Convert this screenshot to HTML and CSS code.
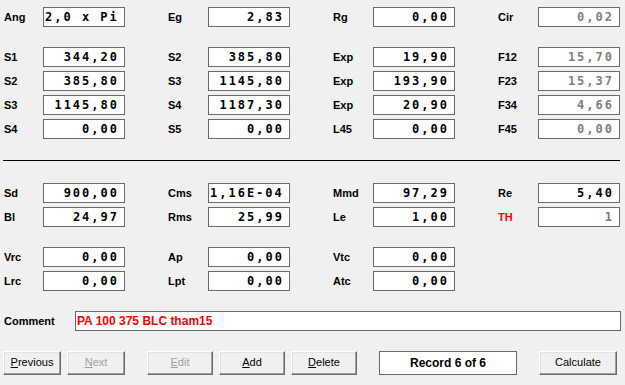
FILE: index.html
```html
<!DOCTYPE html>
<html>
<head>
<meta charset="utf-8">
<link rel="stylesheet" href="styles.css">
</head>
<body>
<div class="form">
  <div class="row">
    <div class="pair"><span class="lbl">Ang</span><span class="box left">2,0 x Pi</span></div>
    <div class="pair"><span class="lbl">Eg</span><span class="box">2,83</span></div>
    <div class="pair"><span class="lbl">Rg</span><span class="box">0,00</span></div>
    <div class="pair"><span class="lbl">Cir</span><span class="box ro">0,02</span></div>
  </div>
  <div class="row spaced">
    <div class="pair"><span class="lbl">S1</span><span class="box">344,20</span></div>
    <div class="pair"><span class="lbl">S2</span><span class="box">385,80</span></div>
    <div class="pair"><span class="lbl">Exp</span><span class="box">19,90</span></div>
    <div class="pair"><span class="lbl">F12</span><span class="box ro">15,70</span></div>
  </div>
  <div class="row">
    <div class="pair"><span class="lbl">S2</span><span class="box">385,80</span></div>
    <div class="pair"><span class="lbl">S3</span><span class="box">1145,80</span></div>
    <div class="pair"><span class="lbl">Exp</span><span class="box">193,90</span></div>
    <div class="pair"><span class="lbl">F23</span><span class="box ro">15,37</span></div>
  </div>
  <div class="row">
    <div class="pair"><span class="lbl">S3</span><span class="box">1145,80</span></div>
    <div class="pair"><span class="lbl">S4</span><span class="box">1187,30</span></div>
    <div class="pair"><span class="lbl">Exp</span><span class="box">20,90</span></div>
    <div class="pair"><span class="lbl">F34</span><span class="box ro">4,66</span></div>
  </div>
  <div class="row">
    <div class="pair"><span class="lbl">S4</span><span class="box">0,00</span></div>
    <div class="pair"><span class="lbl">S5</span><span class="box">0,00</span></div>
    <div class="pair"><span class="lbl">L45</span><span class="box">0,00</span></div>
    <div class="pair"><span class="lbl">F45</span><span class="box ro">0,00</span></div>
  </div>

  <div class="sep"></div>

  <div class="row after-sep">
    <div class="pair"><span class="lbl">Sd</span><span class="box">900,00</span></div>
    <div class="pair"><span class="lbl">Cms</span><span class="box left">1,16E-04</span></div>
    <div class="pair"><span class="lbl">Mmd</span><span class="box">97,29</span></div>
    <div class="pair"><span class="lbl">Re</span><span class="box">5,40</span></div>
  </div>
  <div class="row">
    <div class="pair"><span class="lbl">Bl</span><span class="box">24,97</span></div>
    <div class="pair"><span class="lbl">Rms</span><span class="box">25,99</span></div>
    <div class="pair"><span class="lbl">Le</span><span class="box">1,00</span></div>
    <div class="pair"><span class="lbl red">TH</span><span class="box ro">1</span></div>
  </div>
  <div class="row spaced">
    <div class="pair"><span class="lbl">Vrc</span><span class="box">0,00</span></div>
    <div class="pair"><span class="lbl">Ap</span><span class="box">0,00</span></div>
    <div class="pair"><span class="lbl">Vtc</span><span class="box">0,00</span></div>
  </div>
  <div class="row">
    <div class="pair"><span class="lbl">Lrc</span><span class="box">0,00</span></div>
    <div class="pair"><span class="lbl">Lpt</span><span class="box">0,00</span></div>
    <div class="pair"><span class="lbl">Atc</span><span class="box">0,00</span></div>
  </div>

  <div class="comment-row">
    <span class="lbl">Comment</span>
    <span class="comment">PA 100 375 BLC tham15</span>
  </div>

  <div class="btns">
    <div class="btn narrow"><u>P</u>revious</div>
    <div class="btn narrow disabled"><u>N</u>ext</div>
    <div class="btn group disabled"><u>E</u>dit</div>
    <div class="btn"><u>A</u>dd</div>
    <div class="btn"><u>D</u>elete</div>
    <div class="record group">Record 6 of 6</div>
    <div class="btn calc group">Calculate</div>
  </div>
</div>
</body>
</html>
```

FILE: styles.css
```css
html, body {
  margin: 0;
  padding: 0;
}
body {
  background: #f0f0f0;
  font-family: "Liberation Sans", Arial, sans-serif;
  width: 625px;
  height: 385px;
  overflow: hidden;
}
.form {
  display: flex;
  flex-direction: column;
  padding-top: 7px;
}
.row {
  display: grid;
  grid-template-columns: 121px 122px 122px 122px;
  column-gap: 43px;
  height: 20px;
  margin-left: 4px;
  margin-top: 4px;
}
.row:first-child {
  margin-top: 0;
}
.row.spaced {
  margin-top: 20px;
}
.row.after-sep {
  margin-top: 22px;
}
.pair {
  display: flex;
  align-items: center;
  justify-content: space-between;
}
.lbl {
  font-weight: bold;
  font-size: 11px;
  color: #000;
}
.lbl.red {
  color: #ff0000;
}
.box {
  width: 82px;
  height: 20px;
  box-sizing: border-box;
  border: 1px solid #6a6a6a;
  background: #fff;
  font-family: "DejaVu Sans Mono", monospace;
  font-weight: bold;
  font-size: 12px;
  letter-spacing: 2px;
  line-height: 18px;
  text-align: right;
  padding-right: 5px;
  white-space: pre;
  color: #000;
}
.box.left {
  text-align: left;
  padding-left: 1px;
  padding-right: 0;
}
.box.ro {
  color: #808080;
}
.sep {
  height: 1px;
  background: #000;
  margin: 21px 5px 0 3px;
}
.comment-row {
  display: flex;
  align-items: center;
  margin: 20px 0 0 4px;
  height: 20px;
}
.comment-row .lbl {
  width: 71px;
}
.comment {
  width: 546px;
  height: 20px;
  box-sizing: border-box;
  border: 1px solid #6a6a6a;
  background: #fff;
  color: #ff0000;
  font-weight: bold;
  font-size: 12px;
  line-height: 18px;
  padding-left: 1px;
}
.btns {
  display: flex;
  gap: 6px;
  margin: 20px 0 0 3px;
  height: 24px;
}
.btn {
  width: 66px;
  height: 24px;
  box-sizing: border-box;
  background: #f0f0f0;
  border: 1px solid;
  border-color: #ffffff #696969 #696969 #ffffff;
  box-shadow: inset -1px -1px #a0a0a0, inset 1px 1px #e3e3e3;
  font-size: 11px;
  line-height: 21px;
  text-align: center;
  color: #000;
}
.btn.narrow {
  width: 58px;
}
.btn.disabled {
  color: #a0a0a0;
}
.btn.calc {
  width: 78px;
}
.group {
  margin-left: 16px;
}
.record {
  width: 138px;
  height: 24px;
  box-sizing: border-box;
  border: 1px solid #6a6a6a;
  background: #fff;
  font-weight: bold;
  font-size: 12px;
  line-height: 22px;
  text-align: center;
}
```
